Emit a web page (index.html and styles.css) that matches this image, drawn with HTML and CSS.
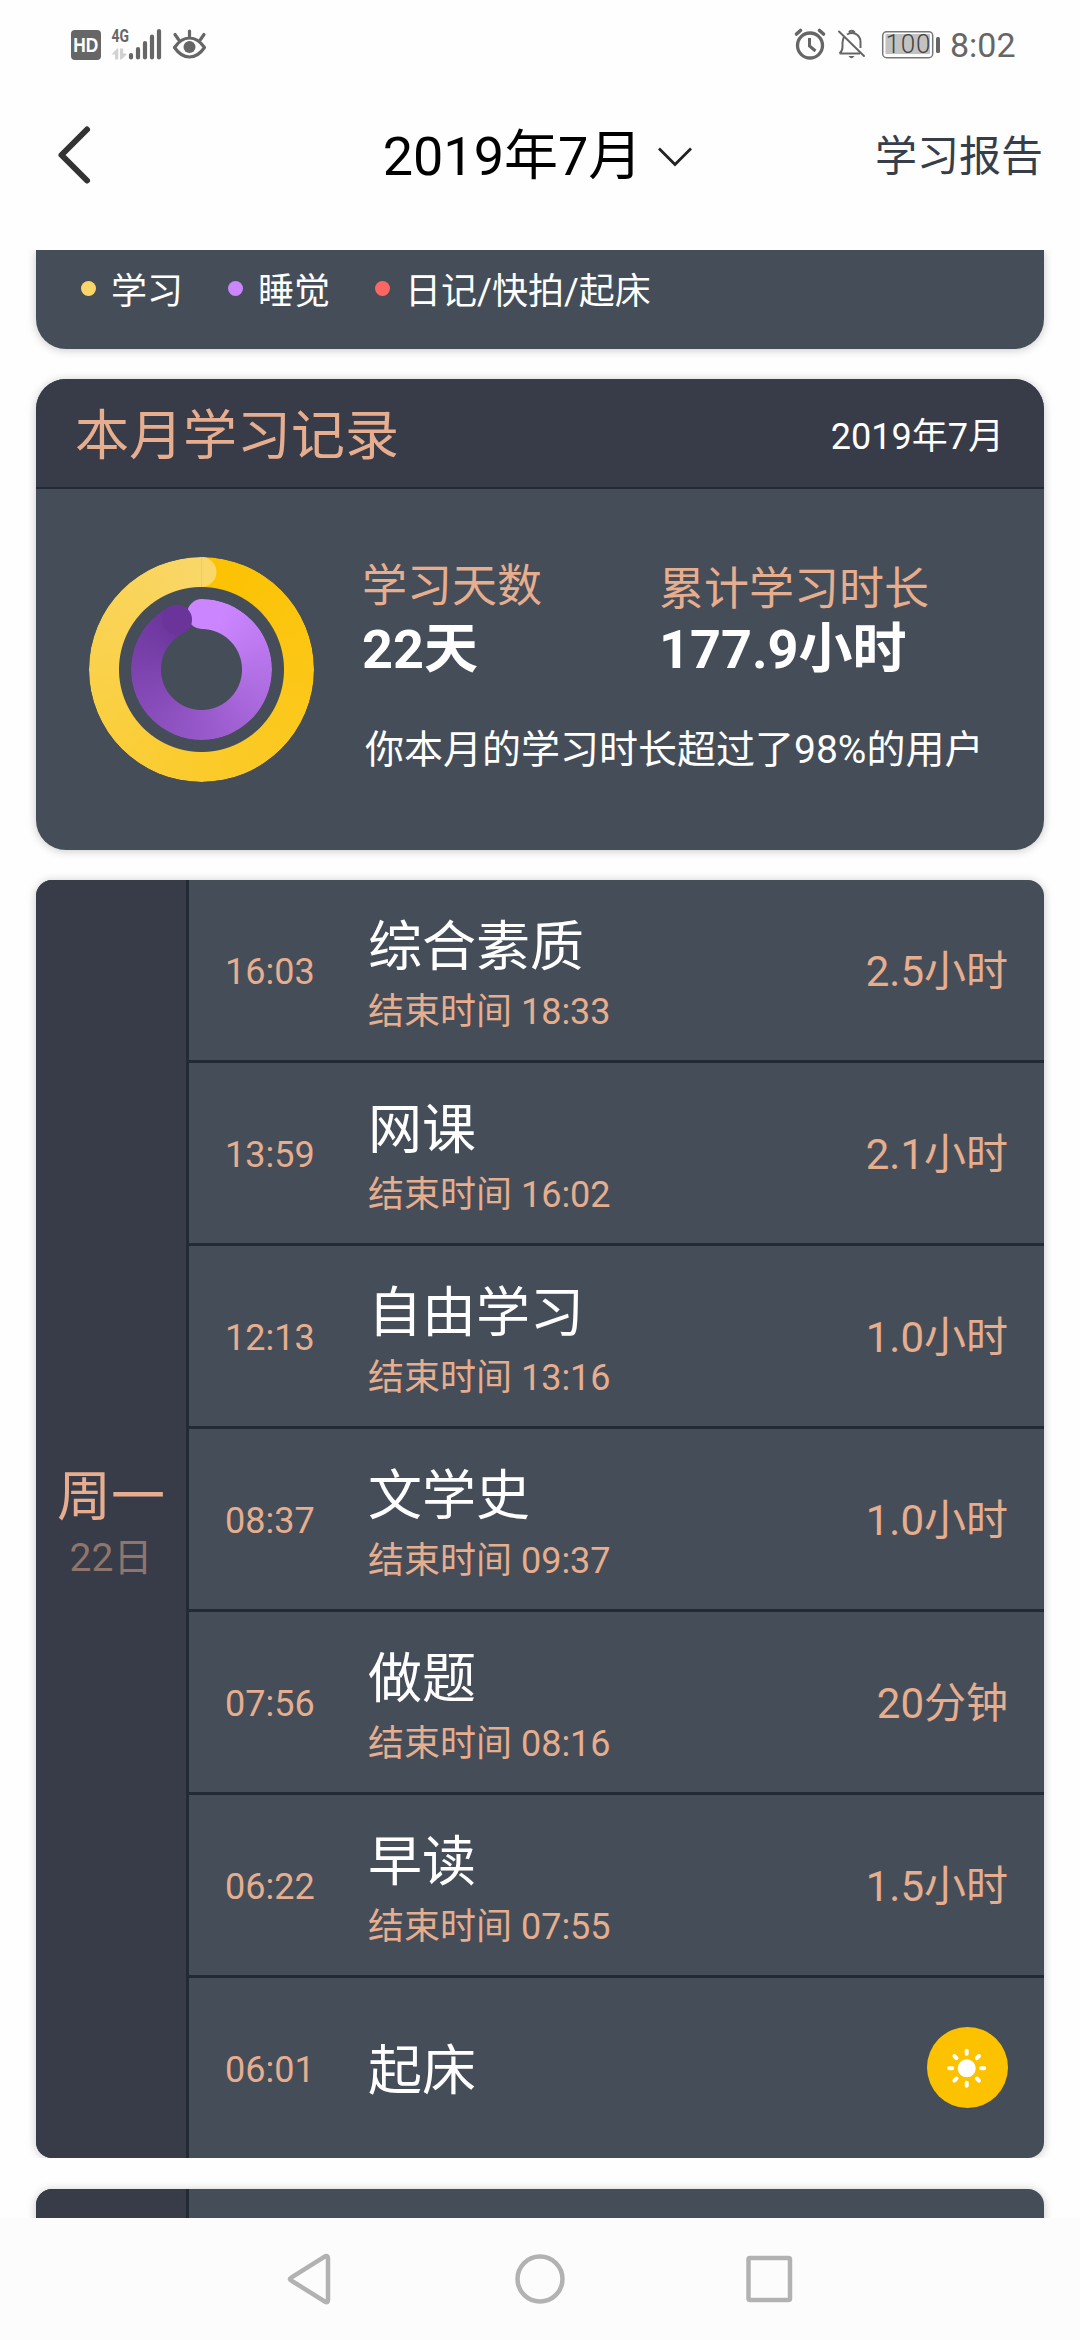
FILE: index.html
```html
<!DOCTYPE html>
<html lang="zh-CN">
<head>
<meta charset="utf-8">
<title>2019年7月</title>
<link rel="stylesheet" href="styles.css">
</head>
<body>
<div class="screen">
  <header class="status">
    <svg class="status-left" width="150" height="40" viewBox="66 25 150 40">
      <rect x="71" y="30" width="30" height="30" rx="4" fill="#666"/>
      <text class="hd" x="73.300" y="52" textLength="25" lengthAdjust="spacingAndGlyphs">HD</text>
      <text class="net" x="111.500" y="42" textLength="17.500" lengthAdjust="spacingAndGlyphs">4G</text>
      <path d="M111.500 54.500L117 48.500H118.300V59.500H115V54.500ZM120 48.500H123.200V53L127 54L121.500 59.500H120Z" fill="#d2d2d2"/>
      <path d="M131 55V57.500M138 49V57.500M145 43V57.500M152 36.500V57.500M159 31V57.500" stroke="#666" stroke-width="4.200" stroke-linecap="round"/>
      <path d="M174.500 47.500Q181 38 189.500 38T204.500 47.500Q198 57 189.500 57T174.500 47.500Z" fill="none" stroke="#666" stroke-width="3.200" stroke-linejoin="round"/>
      <circle cx="189.500" cy="47" r="6" fill="#666"/>
      <path d="M189.500 31V36M175 34.500L178.500 39.500M204 34.500L200.500 39.500" stroke="#666" stroke-width="3.200" stroke-linecap="round"/>
    </svg>
    <div class="status-right">
      <svg width="155" height="40" viewBox="790 25 155 40" fill="none">
        <circle cx="809" cy="45.500" r="12.500" stroke="#666" stroke-width="3.300"/>
        <path d="M808.500 38V46L814.500 51" stroke="#666" stroke-width="3"/>
        <path d="M795.500 34L799.500 30.500M818.500 30.500L822.500 34" stroke="#666" stroke-width="3.600" stroke-linecap="round"/>
        <path d="M838.500 53.500H859M838.500 53.500Q841.500 51 841.500 47V43Q842 38 843.500 36.500M846 34.500Q850 32 854 33.500Q859.500 36 859.500 42V48M848 32.500A3 3 0 0 1 853.500 32.500" stroke="#666" stroke-width="2"/>
        <path d="M847.500 56H853.500Q850.500 60.500 847.500 56Z" fill="#666"/>
        <path d="M838 31.500L863 56" stroke="#666" stroke-width="2" stroke-linecap="round"/>
        <rect x="881.700" y="31.700" width="50" height="26" rx="4" stroke="#777" stroke-width="1.500"/>
        <rect x="884.500" y="34" width="44.500" height="20" rx="1" fill="#c2c2c2"/>
        <rect x="935" y="37" width="4" height="16" rx="1.500" fill="#666"/>
        <text class="charge" x="884.500" y="53" textLength="45">100</text>
      </svg>
      <span class="clock">8:02</span>
    </div>
  </header>

  <nav class="bar">
    <svg class="back" width="40" height="64" viewBox="0 0 40 64"><path d="M33 6.500L7.500 32L33 57.500" fill="none" stroke="#333" stroke-width="6" stroke-linecap="round" stroke-linejoin="round"/></svg>
    <div class="month"><span>2019年7月</span>
      <svg width="36" height="24" viewBox="0 0 36 24"><path d="M2 3.500L18 19.500L34 3.500" fill="none" stroke="#222" stroke-width="2.800"/></svg>
    </div>
    <a class="report">学习报告</a>
  </nav>

  <main class="content">
    <section class="card legend">
      <span class="key"><i class="dot dot-study"></i>学习</span>
      <span class="key"><i class="dot dot-sleep"></i>睡觉</span>
      <span class="key"><i class="dot dot-diary"></i>日记/快拍/起床</span>
    </section>

    <section class="card record">
      <div class="record-head"><h2>本月学习记录</h2><span>2019年7月</span></div>
      <div class="record-body">
        <div class="rings">
          <div class="ring ring-study"></div>
          <div class="ring ring-sleep"></div>
          <svg class="caps" width="225" height="225" viewBox="-112.500 -112.500 225 225">
            <path d="M0 -112.500A15 15 0 0 1 0 -82.500Z" fill="#f9d768"/>
            <path d="M0.500 -70.500A15 15 0 0 0 0.500 -40.500Z" fill="#cb86ff"/>
            <circle cx="-24.500" cy="-49.800" r="15" fill="#6a349b"/>
          </svg>
        </div>
        <div class="figures">
          <div class="stat"><span class="label">学习天数</span><b>22天</b></div>
          <div class="stat stat-total"><span class="label">累计学习时长</span><b>177.9小时</b></div>
          <p>你本月的学习时长超过了98%的用户</p>
        </div>
      </div>
    </section>

    <section class="card day">
      <aside class="date"><span class="week">周一</span><span class="num">22日</span></aside>
      <ul class="rows">
        <li><time>16:03</time><div class="task"><h3>综合素质</h3><p>结束时间 18:33</p></div><span class="dur">2.5小时</span></li>
        <li><time>13:59</time><div class="task"><h3>网课</h3><p>结束时间 16:02</p></div><span class="dur">2.1小时</span></li>
        <li><time>12:13</time><div class="task"><h3>自由学习</h3><p>结束时间 13:16</p></div><span class="dur">1.0小时</span></li>
        <li><time>08:37</time><div class="task"><h3>文学史</h3><p>结束时间 09:37</p></div><span class="dur">1.0小时</span></li>
        <li><time>07:56</time><div class="task"><h3>做题</h3><p>结束时间 08:16</p></div><span class="dur">20分钟</span></li>
        <li><time>06:22</time><div class="task"><h3>早读</h3><p>结束时间 07:55</p></div><span class="dur">1.5小时</span></li>
        <li><time>06:01</time><div class="task"><h3>起床</h3></div>
          <svg class="sun" width="81" height="81" viewBox="-40.500 -40.500 81 81">
            <circle r="40.500" fill="#fcc200"/>
            <g transform="translate(-0.800 0.800)">
              <circle r="9" fill="#fff"/>
              <path d="M0 -14.500V-17.500M0 14.500V17.500M-14.500 0H-17.500M14.500 0H17.500M-10.200 -10.200L-12.300 -12.300M10.200 -10.200L12.300 -12.300M-10.200 10.200L-12.300 12.300M10.200 10.200L12.300 12.300" stroke="#fff" stroke-width="4" stroke-linecap="round"/>
            </g>
          </svg>
        </li>
      </ul>
    </section>

    <section class="card day">
      <aside class="date"></aside>
      <ul class="rows"><li></li></ul>
    </section>
  </main>

  <footer class="softkeys">
    <svg width="60" height="60" viewBox="0 0 60 60"><path d="M11.200 28.700L45.500 7.200Q48 6.500 48 9.500V51Q48 54 45.500 53L11.200 31.500Q8.500 30 11.200 28.700Z"/></svg>
    <svg width="60" height="60" viewBox="0 0 60 60"><circle cx="30" cy="30" r="22.500"/></svg>
    <svg width="60" height="60" viewBox="0 0 60 60"><rect x="8.500" y="9" width="41.500" height="42" rx="1.500"/></svg>
  </footer>
</div>
</body>
</html>
```
FILE: styles.css
```css
* { box-sizing: border-box; }

body, h2, h3, p, ul { margin: 0; padding: 0; font-weight: 400; }

body {
  background: #fefefe;
  font-family: Roboto, "Noto Sans CJK SC", sans-serif;
}

svg { display: block; flex: none; }

.screen {
  width: 1080px;
  height: 2340px;
  display: flex;
  flex-direction: column;
  overflow: hidden;
}

/* status bar */
.status {
  height: 90px;
  flex: none;
  display: flex;
  justify-content: space-between;
  padding: 25px 64px 25px 66px;
}

.status-right { display: flex; gap: 4px; }

.hd { font: 700 21px "Liberation Sans", sans-serif; fill: #fff; }
.net { font: 700 18.500px Roboto, sans-serif; fill: #666; }
.charge { font: 300 26px Roboto, sans-serif; fill: #444; }

.clock {
  font-size: 34px;
  line-height: 41px;
  width: 66px;
  color: #666;
}

/* title bar */
.bar {
  height: 160px;
  flex: none;
  display: grid;
  grid-template-columns: 1fr auto 1fr;
  padding: 26px 37px 54px 54px;
}

.back { align-self: center; margin-bottom: 4px; }

.month {
  display: flex;
  align-items: center;
  gap: 15px;
  font-size: 54px;
  line-height: 80px;
  color: #000;
  margin-right: 21px;
}

.report {
  justify-self: end;
  font-size: 42px;
  line-height: 81px;
  color: #373e49;
}

/* scrolling content */
.content {
  height: 1968px;
  flex: none;
  overflow: hidden;
  padding: 0 36px;
}

.card {
  background: #454e58;
  box-shadow: 0 1px 10px rgba(0, 0, 0, .22);
}

.legend {
  height: 99px;
  border-radius: 0 0 30px 30px;
  display: flex;
  gap: 45px;
  padding: 17px 45px 0;
  font-size: 36px;
  line-height: 50px;
  color: #fff;
}

.key { display: flex; gap: 15px; }

.dot {
  width: 15px;
  height: 15px;
  border-radius: 50%;
  margin-top: 14px;
}

.dot-study { background: #f9d667; }
.dot-sleep { background: #cb86ff; }
.dot-diary { background: #ff6663; }

.record {
  margin-top: 30px;
  height: 471px;
  border-radius: 30px;
  overflow: hidden;
}

.record-head {
  height: 110px;
  display: flex;
  justify-content: space-between;
  background: #373c48;
  border-bottom: 2px solid #222b35;
  padding: 18px 40px 0 39px;
  line-height: 80px;
  color: #fff;
  font-size: 36px;
}

.record-head h2 { font-size: 54px; color: #e6ad8e; }

.record-body {
  display: flex;
  padding: 67px 0 0 53px;
}

.rings {
  position: relative;
  width: 225px;
  height: 225px;
  margin-top: 1px;
  display: grid;
  place-items: center;
}

.ring {
  grid-area: 1 / 1;
  border-radius: 50%;
}

.ring-study {
  width: 225px;
  height: 225px;
  background: conic-gradient(#fcc200, #fbcb2b 50%, #f9d768);
  mask: radial-gradient(circle, transparent 82px, #000 83px);
}

.ring-sleep {
  width: 141px;
  height: 141px;
  background: conic-gradient(#cb86ff 6%, #9a5bcc 47%, #6a349b 92.800%, transparent 92.800%);
  mask: radial-gradient(circle, transparent 40px, #000 41px);
}

.caps { position: absolute; inset: 0; }

.figures {
  margin-left: 48px;
  display: grid;
  grid-template-columns: 297px auto;
  align-content: start;
  color: #fff;
}

.stat { display: flex; flex-direction: column; }
.label { font-size: 45px; line-height: 62px; color: #e6ad8e; }
.stat b { font-size: 54px; line-height: 64px; font-weight: 700; }
.stat-total .label { line-height: 68px; }
.stat-total b { line-height: 52px; }

.figures p {
  grid-column: 1 / -1;
  margin: 38px 0 0 3px;
  font-size: 39px;
  line-height: 60px;
}

.day {
  display: grid;
  grid-template-columns: 153px 1fr;
  margin-top: 30px;
  border-radius: 16px;
  overflow: hidden;
  clip-path: inset(-12px -12px 0);
}

.day + .day { margin-top: 31px; }

.date {
  display: flex;
  flex-direction: column;
  justify-content: center;
  text-align: center;
  background: #373c48;
  border-right: 3px solid #222b35;
  padding-top: 17px;
  line-height: 60px;
  color: #e6ad8e;
}

.week { font-size: 54px; }
.num { font-size: 39px; color: #8f756b; }

.rows { list-style: none; }

.rows li {
  display: flex;
  height: 183px;
  border-bottom: 3px solid #222b35;
  padding: 0 36px;
}

.rows li:last-child { height: 180px; border-bottom: 0; }

.rows time {
  width: 143px;
  font-size: 36px;
  line-height: 184px;
  color: #e6ad8e;
}

.task { flex: 1; padding-top: 31px; }
.task h3 { font-size: 54px; line-height: 73px; color: #fff; }
.task p { font-size: 36px; line-height: 57px; color: #e6ad8e; }
.rows li:last-child .task { padding-top: 57px; }

.dur { font-size: 42px; line-height: 184px; color: #e6ad8e; }
.sun { margin-top: 49px; }

/* system keys */
.softkeys {
  flex: 1;
  display: flex;
  justify-content: center;
  gap: 170px;
  padding-top: 31px;
  background: #fcfcfc;
}

.softkeys path, .softkeys circle, .softkeys rect {
  fill: none;
  stroke: #b2b2b2;
  stroke-width: 4.500px;
}
```
